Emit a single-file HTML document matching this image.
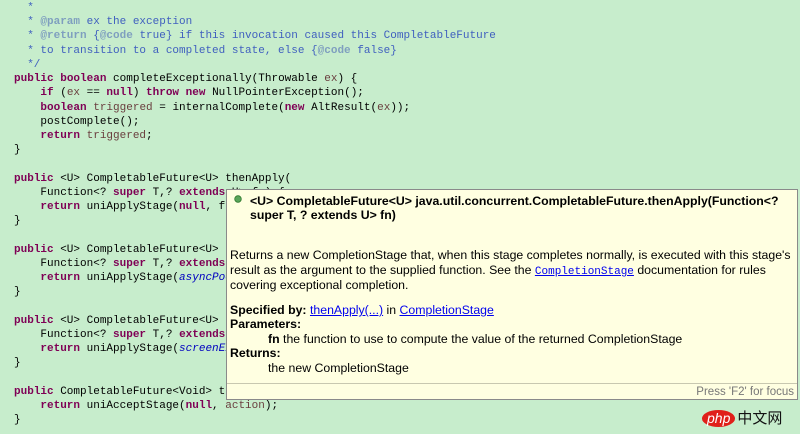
<!DOCTYPE html>
<html><head><style>
body{margin:0;width:800px;height:434px;background:#c7edcc;overflow:hidden;position:relative}
pre{position:absolute;left:14px;top:1px;margin:0;font-family:"Liberation Mono",monospace;font-size:11px;line-height:14.22px;color:#000}
.k{color:#7f0055;font-weight:bold}.c{color:#3f5fbf}.t{color:#7f9fbf;font-weight:bold}.v{color:#6a3e3e}.f{color:#0000c0;font-style:italic}
#pop{position:absolute;left:226px;top:189px;width:572px;height:211px;background:#ffffe1;border:1px solid #8a8a8a;box-sizing:border-box;font-family:"Liberation Sans",sans-serif;font-size:12.3px;color:#000}
#pop p{margin:0;position:absolute;left:3px;white-space:nowrap;line-height:14.5px}
a{color:#0000ee;text-decoration:underline}
.mono{font-family:"Liberation Mono",monospace;font-size:11px}
#bar{position:absolute;left:0;right:0;top:193px;border-top:1px solid #c8c8b0}
#f2{position:absolute;right:3px;top:196px;color:#777;font-size:11.5px}
#logo{position:absolute;left:702px;top:407px;font-family:"Liberation Sans","Noto Sans CJK SC",sans-serif}
</style></head><body>
<pre>  <span class="c">*</span>
  <span class="c">* <span class="t">@param</span> ex the exception</span>
  <span class="c">* <span class="t">@return</span> {<span class="t">@code</span> true} if this invocation caused this CompletableFuture</span>
  <span class="c">* to transition to a completed state, else {<span class="t">@code</span> false}</span>
  <span class="c">*/</span>
<span class="k">public</span> <span class="k">boolean</span> completeExceptionally(Throwable <span class="v">ex</span>) {
    <span class="k">if</span> (<span class="v">ex</span> == <span class="k">null</span>) <span class="k">throw</span> <span class="k">new</span> NullPointerException();
    <span class="k">boolean</span> <span class="v">triggered</span> = internalComplete(<span class="k">new</span> AltResult(<span class="v">ex</span>));
    postComplete();
    <span class="k">return</span> <span class="v">triggered</span>;
}

<span class="k">public</span> &lt;U&gt; CompletableFuture&lt;U&gt; thenApply(
    Function&lt;? <span class="k">super</span> T,? <span class="k">extends</span> U&gt; fn) {
    <span class="k">return</span> uniApplyStage(<span class="k">null</span>, fn);
}

<span class="k">public</span> &lt;U&gt; CompletableFuture&lt;U&gt; thenApplyAsync(
    Function&lt;? <span class="k">super</span> T,? <span class="k">extends</span> U&gt; fn) {
    <span class="k">return</span> uniApplyStage(<span class="f">asyncPool</span>, fn);
}

<span class="k">public</span> &lt;U&gt; CompletableFuture&lt;U&gt; thenApplyAsync(
    Function&lt;? <span class="k">super</span> T,? <span class="k">extends</span> U&gt; fn, Executor executor) {
    <span class="k">return</span> uniApplyStage(<span class="f">screenExecutor</span>(executor), fn);
}

<span class="k">public</span> CompletableFuture&lt;Void&gt; thenAccept(Consumer&lt;? <span class="k">super</span> T&gt; <span class="v">action</span>) {
    <span class="k">return</span> uniAcceptStage(<span class="k">null</span>, <span class="v">action</span>);
}</pre>
<div id="pop">
<svg style="position:absolute;left:7px;top:5px" width="8" height="8"><circle cx="4" cy="4" r="3.3" fill="#5aa55a" stroke="#2f7a2f" stroke-width="0.8"/></svg>
<p style="left:23px;top:4px;font-weight:bold">&lt;U&gt; CompletableFuture&lt;U&gt; java.util.concurrent.CompletableFuture.thenApply(Function&lt;?</p>
<p style="left:23px;top:18px;font-weight:bold">super T, ? extends U&gt; fn)</p>
<p style="top:58px">Returns a new CompletionStage that, when this stage completes normally, is executed with this stage's</p>
<p style="top:73px">result as the argument to the supplied function. See the <a class="mono">CompletionStage</a> documentation for rules</p>
<p style="top:88px">covering exceptional completion.</p>
<p style="top:113px"><b>Specified by:</b> <a>thenApply(...)</a> in <a>CompletionStage</a></p>
<p style="top:127px"><b>Parameters:</b></p>
<p style="left:41px;top:142px"><b>fn</b> the function to use to compute the value of the returned CompletionStage</p>
<p style="top:156px"><b>Returns:</b></p>
<p style="left:41px;top:171px">the new CompletionStage</p>
<div id="bar"></div>
<div id="f2">Press 'F2' for focus</div>
</div>
<div id="logo"><span style="display:inline-block;background:#e0201a;color:#fff;border-radius:50%;font-style:italic;font-size:14px;padding:0 5px;line-height:17px">php</span><span style="font-size:15px;margin-left:2px;color:#111">中文网</span></div>
</body></html>
